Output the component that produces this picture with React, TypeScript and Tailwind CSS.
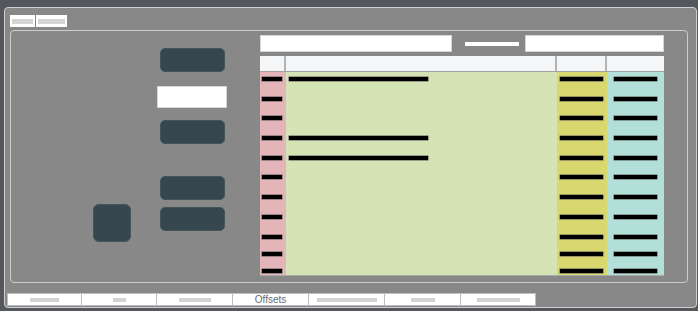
const rows = [
  { long: true, h: "h-[19.7px]" },
  { long: false, h: "h-[19.7px]" },
  { long: false, h: "h-[19.7px]" },
  { long: true, h: "h-[19.7px]" },
  { long: true, h: "h-[19.7px]" },
  { long: false, h: "h-[19.7px]" },
  { long: false, h: "h-[19.7px]" },
  { long: false, h: "h-[19.7px]" },
  { long: false, h: "h-[17px]" },
  { long: false, h: "h-[17px]" },
  { long: false, h: "h-[17px]" },
];

const bottomTabs = [
  { w: "w-[75px]", bar: "w-[29px]" },
  { w: "w-[75px]", bar: "w-[13px]" },
  { w: "w-[76px]", bar: "w-[32px]" },
  { w: "w-[76px]", label: "Offsets" },
  { w: "w-[76px]", bar: "w-[60px]" },
  { w: "w-[76px]", bar: "w-[24px]" },
  { w: "w-[75px]", bar: "w-[43px]" },
];

function Bar({ className }: { className: string }) {
  return <div className={`h-[4px] bg-black shadow-[0_0_0_0.5px_#555] ${className}`} />;
}

function DarkButton() {
  return <div className="w-[65px] h-[24px] rounded-[5px] bg-[#37474f] border border-[#44545b]" />;
}

export default function App() {
  return (
    <div
      className="w-[698px] h-[311px] bg-[#54575c] pt-[7px] pl-[4px] pr-[1px] pb-[3px]"
      style={{ fontFamily: '"Liberation Sans", Arial, sans-serif' }}
    >
      <div className="h-full flex flex-col bg-[#878887] border border-[#cfcfcf] rounded-[4px]">
        {/* top tabs */}
        <div className="flex ml-[5px] mt-[7px] h-[12px]">
          <div className="w-[25px] h-full bg-white p-[1px] flex items-center px-[2px]">
            <div className="w-full h-[5px] bg-[#d4d4d4]" />
          </div>
          <div className="w-[31px] h-full bg-white ml-[1px] flex items-center px-[2px]">
            <div className="w-full h-[5px] bg-[#d4d4d4]" />
          </div>
        </div>

        {/* inner panel */}
        <div className="ml-[5px] mr-[8px] mt-[3px] h-[253px] border border-[#cdcdcd] rounded-[4px] flex pl-[82px] pr-[23px]">
          {/* square */}
          <div className="w-[38px] pt-[173px]">
            <div className="w-[38px] h-[38px] rounded-[6px] bg-[#37474f] border border-[#44545b]" />
          </div>

          {/* buttons column */}
          <div className="w-[70px] ml-[26px] pt-[17px] flex flex-col items-center">
            <DarkButton />
            <div className="mt-[14px] w-[70px] h-[22px] bg-white border border-[#d8d8d8]" />
            <div className="mt-[12px]">
              <DarkButton />
            </div>
            <div className="mt-[32px]">
              <DarkButton />
            </div>
            <div className="mt-[7px]">
              <DarkButton />
            </div>
          </div>

          {/* table area */}
          <div className="w-[404px] ml-[33px] pt-[4px] flex flex-col">
            <div className="flex items-center h-[17px]">
              <div className="w-[192px] h-full bg-white border border-[#d6d6d6]" />
              <div className="w-[54px] h-[4px] ml-[13px] bg-white" />
              <div className="w-[139px] h-full ml-[6px] bg-white border border-[#d6d6d6]" />
            </div>

            <div className="mt-[4px] flex h-[16px] border-b border-[#a3a3a3]">
              <div className="w-[26px] bg-[#f5f6f8] border-r-2 border-[#b4b4b4]" />
              <div className="w-[271px] bg-[#f5f6f8] border-r-2 border-[#b4b4b4]" />
              <div className="w-[50px] bg-[#f5f6f8] border-r-2 border-[#b4b4b4]" />
              <div className="w-[57px] bg-[#f5f6f8]" />
            </div>

            <div className="h-[204px] overflow-hidden border-b border-[#a9a9a9]">
              {rows.map((r, i) => (
                <div key={i} className={`flex ${r.h}`}>
                  <div className="w-[26px] bg-[#e3b5b8] pt-[5px] pl-[2px]">
                    <Bar className="w-[20px]" />
                  </div>
                  <div className="w-[271px] bg-[#d4e4b4] pt-[5px] pl-[3px]">
                    {r.long && <Bar className="w-[139px]" />}
                  </div>
                  <div className="w-[50px] bg-[#d8d86e] pt-[5px] pl-[3px]">
                    <Bar className="w-[43px]" />
                  </div>
                  <div className="w-[57px] bg-[#b2e0d8] pt-[5px] pl-[7px]">
                    <Bar className="w-[43px]" />
                  </div>
                </div>
              ))}
            </div>
          </div>
        </div>

        {/* bottom tabs */}
        <div className="flex ml-[2px] mt-[10px] h-[13px]">
          {bottomTabs.map((t, i) => (
            <div
              key={i}
              className={`${t.w} h-full bg-white border border-[#bdbdbd] ${i > 0 ? "border-l-0" : ""} flex items-center justify-center`}
            >
              {t.label ? (
                <span className="text-[10px] leading-none text-[#6b6b6b]">{t.label}</span>
              ) : (
                <div className={`${t.bar} h-[4px] bg-[#d3d3d3]`} />
              )}
            </div>
          ))}
        </div>
      </div>
    </div>
  );
}
